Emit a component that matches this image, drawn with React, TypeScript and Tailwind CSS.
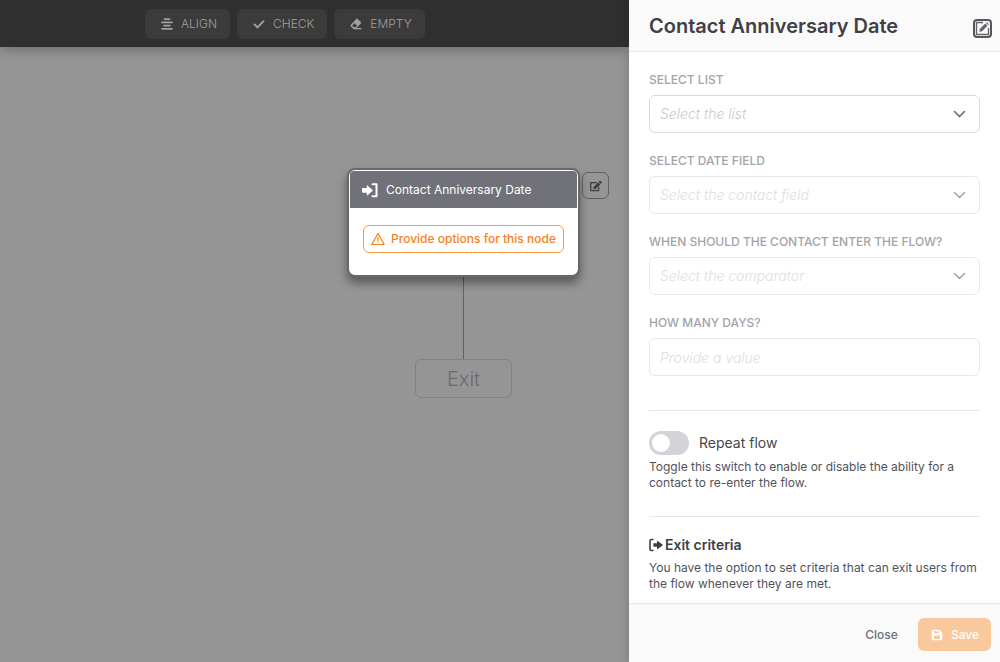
import { useState } from 'react';
import type { ReactNode } from 'react';
import { FaEdit } from 'react-icons/fa';
import { BiSolidSave } from 'react-icons/bi';

type IconProps = { className?: string };

function AlignIcon({ className }: IconProps) {
  return (
    <svg viewBox="0 0 12 12" className={className} fill="none" stroke="currentColor" strokeWidth="1.7" strokeLinecap="round">
      <path d="M3.5 1.2h5M1 4.4h10M3 7.6h6M1 10.8h10" />
    </svg>
  );
}

function CheckIcon({ className }: IconProps) {
  return (
    <svg viewBox="0 0 12 12" className={className} fill="none" stroke="currentColor" strokeWidth="1.9" strokeLinecap="round" strokeLinejoin="round">
      <path d="M1.5 6.4l3 3 6-6.2" />
    </svg>
  );
}

function EraserIcon({ className }: IconProps) {
  return (
    <svg viewBox="0 0 12 12" className={className}>
      <path d="M6.2.9q.7-.7 1.4 0l3.2 3.200q.7.700 0 1.400L6 10.400H3L.8 8.200q-.7-.7 0-1.400z" fill="currentColor" />
      <path d="M2.200 7.500L4.500 5.300l2.600 2.500-1.500 1.500H3.800z" fill="#3b3b3b" />
      <path d="M3 10.600h8.400" stroke="currentColor" strokeWidth="1.300" />
    </svg>
  );
}

function EnterIcon({ className }: IconProps) {
  return (
    <svg viewBox="0 0 16 16" className={className} fill="currentColor">
      <path d="M.8 6h4V3.800q0-.9.7-.3l5 4.400q.5.500 0 1l-5 4.400q-.7.500-.7-.4v-2.200h-4q-.8 0-.8-.8V6.800Q0 6 .8 6z" />
      <path d="M10.500 2.200h4v12h-4" fill="none" stroke="currentColor" strokeWidth="2" strokeLinejoin="round" strokeLinecap="round" />
    </svg>
  );
}

function LeaveIcon({ className }: IconProps) {
  return (
    <svg viewBox="0 0 14 14" className={className} fill="currentColor">
      <path d="M4.400 5.200H8v-2q0-.8.7-.3l4.800 3.700q.5.400 0 .8l-4.800 3.700q-.7.500-.7-.3v-2H4.400z" />
      <path d="M4 1.500H2.500Q1 1.500 1 3v8q0 1.500 1.500 1.500H4" fill="none" stroke="currentColor" strokeWidth="1.600" strokeLinecap="round" />
    </svg>
  );
}

function WarningIcon({ className }: IconProps) {
  return (
    <svg viewBox="0 0 14 14" className={className} fill="none" stroke="currentColor" strokeWidth="1.200" strokeLinecap="round" strokeLinejoin="round">
      <path d="M7 1.500L13.200 12.500H.8z" />
      <path d="M7 5.500v3.200M7 10.500v.1" />
    </svg>
  );
}

function ChevronIcon({ className }: IconProps) {
  return (
    <svg viewBox="0 0 18 18" className={className} fill="none" stroke="currentColor" strokeWidth="1.500" strokeLinecap="round" strokeLinejoin="round">
      <path d="M4.500 6.500l5 5 5-5" />
    </svg>
  );
}

function RenameIcon({ className }: IconProps) {
  return (
    <svg viewBox="0 0 15 15" className={className} fill="none" stroke="currentColor">
      <path d="M8 1.500H1.500v12h12V7" strokeWidth="1.400" />
      <path d="M4.200 10.800l.6-2.900 5.400-5.400 2.300 2.300-5.400 5.400z" fill="currentColor" stroke="none" />
      <path d="M10.900 1.800l.8-.8 2.300 2.300-.8.8z" fill="currentColor" stroke="none" />
    </svg>
  );
}

const tools = [
  { label: 'Align', icon: AlignIcon },
  { label: 'Check', icon: CheckIcon },
  { label: 'Empty', icon: EraserIcon },
];

const selects = [
  { id: 'list', label: 'Select list', placeholder: 'Select the list', disabled: false },
  { id: 'date-field', label: 'Select date field', placeholder: 'Select the contact field', disabled: true },
  { id: 'comparator', label: 'When should the contact enter the flow?', placeholder: 'Select the comparator', disabled: true },
];

function Field({ id, label, children }: { id: string; label: string; children: ReactNode }) {
  return (
    <div className="flex flex-col gap-[7px]">
      <label htmlFor={id} className="text-xs leading-4 font-medium uppercase text-[#a3a3ab]">
        {label}
      </label>
      {children}
    </div>
  );
}

function Toolbar() {
  return (
    <header className="h-[47px] shrink-0 flex items-center gap-[7px] pl-[145px] bg-[#2f2f2f] shadow-[0_2px_12px_rgba(0,0,0,0.3)] z-10">
      {tools.map((tool) => {
        const Icon = tool.icon;
        return (
          <button
            key={tool.label}
            className="h-[30px] pl-4 pr-[13px] flex items-center gap-2 rounded-md bg-[#3b3b3b] text-xs font-light uppercase text-[#a0a0a0]"
          >
            <Icon className="w-3 h-3" />
            {tool.label}
          </button>
        );
      })}
    </header>
  );
}

function Canvas() {
  return (
    <div className="relative flex-1 bg-[#959595]">
      {/* Connector */}
      <div className="absolute left-[463px] top-[230px] w-px h-[82px] bg-[#606066]" />

      {/* Trigger node */}
      <div className="absolute left-[347px] top-[121px] w-[233px] h-[109px] rounded-lg border-2 border-[#68686a] bg-white p-px shadow-[0_6px_10px_rgba(0,0,0,0.4)]">
        <div className="h-[37px] px-3 flex items-center gap-2 rounded-t-sm bg-[#71717a] text-xs text-white">
          <EnterIcon className="w-4 h-4" />
          Contact Anniversary Date
        </div>
        <div className="px-[13px] pt-[17px]">
          <div className="h-7 flex items-center justify-center gap-[6px] rounded-md border border-[#f99b4a] text-xs font-medium text-[#f97f16] whitespace-nowrap">
            <WarningIcon className="w-[14px] h-[14px]" />
            Provide options for this node
          </div>
        </div>
      </div>
      <button
        aria-label="Edit node"
        className="absolute left-[582px] top-[125px] w-[27px] h-[27px] flex items-center justify-center rounded-md border border-[#606060] text-[#3f3f43]"
      >
        <FaEdit className="w-3 h-3" />
      </button>

      {/* Exit node */}
      <div className="absolute left-[415px] top-[312px] w-[97px] h-[39px] flex items-center justify-center rounded-md border border-[#828286] text-xl font-light text-[#6a6a74]">
        Exit
      </div>
    </div>
  );
}

export default function App() {
  const [repeat, setRepeat] = useState(false);

  return (
    <div className="h-screen flex overflow-hidden font-['Inter',sans-serif]">
      <main className="flex-1 min-w-0 flex flex-col">
        <Toolbar />
        <Canvas />
      </main>

      <aside className="w-[371px] shrink-0 flex flex-col bg-white z-20 shadow-[0_0_10px_rgba(0,0,0,0.2)]">
        <div className="h-[52px] shrink-0 flex items-end justify-between pl-5 pr-2 pb-[13px] bg-[#fafafa] border-b border-[#e6e6e8]">
          <h1 className="text-xl leading-6 font-semibold text-[#3f3f46]">Contact Anniversary Date</h1>
          <button aria-label="Rename" className="w-[19px] h-[19px] flex items-center justify-center rounded-sm border-2 border-[#57575b] text-[#66666a]">
            <RenameIcon className="w-[15px] h-[15px]" />
          </button>
        </div>

        <div className="flex-1 min-h-0 overflow-hidden px-5 pt-5">
          <div className="flex flex-col gap-5">
            {selects.map((field) => (
              <Field key={field.id} id={field.id} label={field.label}>
                <div className={field.disabled ? 'relative opacity-60' : 'relative'}>
                  <select
                    id={field.id}
                    disabled={field.disabled}
                    defaultValue=""
                    className="w-full h-[38px] px-[10px] appearance-none rounded-md border border-[#d9d9dd] bg-white text-sm font-light italic text-[#c8c8ce]"
                  >
                    <option value="">{field.placeholder}</option>
                  </select>
                  <ChevronIcon className="absolute right-3 top-[10px] w-[18px] h-[18px] text-[#66666d] pointer-events-none" />
                </div>
              </Field>
            ))}
            <Field id="days" label="How many days?">
              <input
                id="days"
                disabled
                placeholder="Provide a value"
                className="w-full h-[38px] px-[10px] rounded-md border border-[#d9d9dd] bg-white text-sm font-light italic placeholder:text-[#c8c8ce] opacity-60"
              />
            </Field>
          </div>

          <div className="mt-[34px] pt-5 border-t border-[#e6e6e8]">
            <label className="flex items-center gap-[10px] text-sm leading-6 text-[#46464d]">
              <input
                type="checkbox"
                checked={repeat}
                onChange={(e) => setRepeat(e.target.checked)}
                className="appearance-none w-10 h-6 rounded-full bg-[#d4d4d8] before:block before:w-[18px] before:h-[18px] before:m-[3px] before:rounded-full before:bg-white checked:bg-orange-400 checked:before:ml-[19px]"
              />
              Repeat flow
            </label>
            <p className="mt-1 text-xs leading-4 text-[#52525b]">
              Toggle this switch to enable or disable the ability for a contact to re-enter the flow.
            </p>
          </div>

          <div className="mt-[25px] pt-5 border-t border-[#e6e6e8]">
            <h2 className="flex items-center gap-[2px] text-sm leading-4 font-semibold text-[#3f3f46]">
              <LeaveIcon className="w-[14px] h-[14px]" />
              Exit criteria
            </h2>
            <p className="mt-[7px] text-xs leading-4 text-[#52525b]">
              You have the option to set criteria that can exit users from the flow whenever they are met.
            </p>
          </div>
        </div>

        <div className="h-[59px] shrink-0 flex items-center justify-end gap-5 pt-[3px] pr-[9px] bg-[#fafafa] border-t border-[#e6e6e8] text-xs font-medium">
          <button className="text-[#6b7280]">Close</button>
          <button disabled className="h-[33px] px-3 flex items-center gap-[7px] rounded-md bg-[#f9c89d] text-white">
            <BiSolidSave className="w-[14px] h-[14px]" />
            Save
          </button>
        </div>
      </aside>
    </div>
  );
}
